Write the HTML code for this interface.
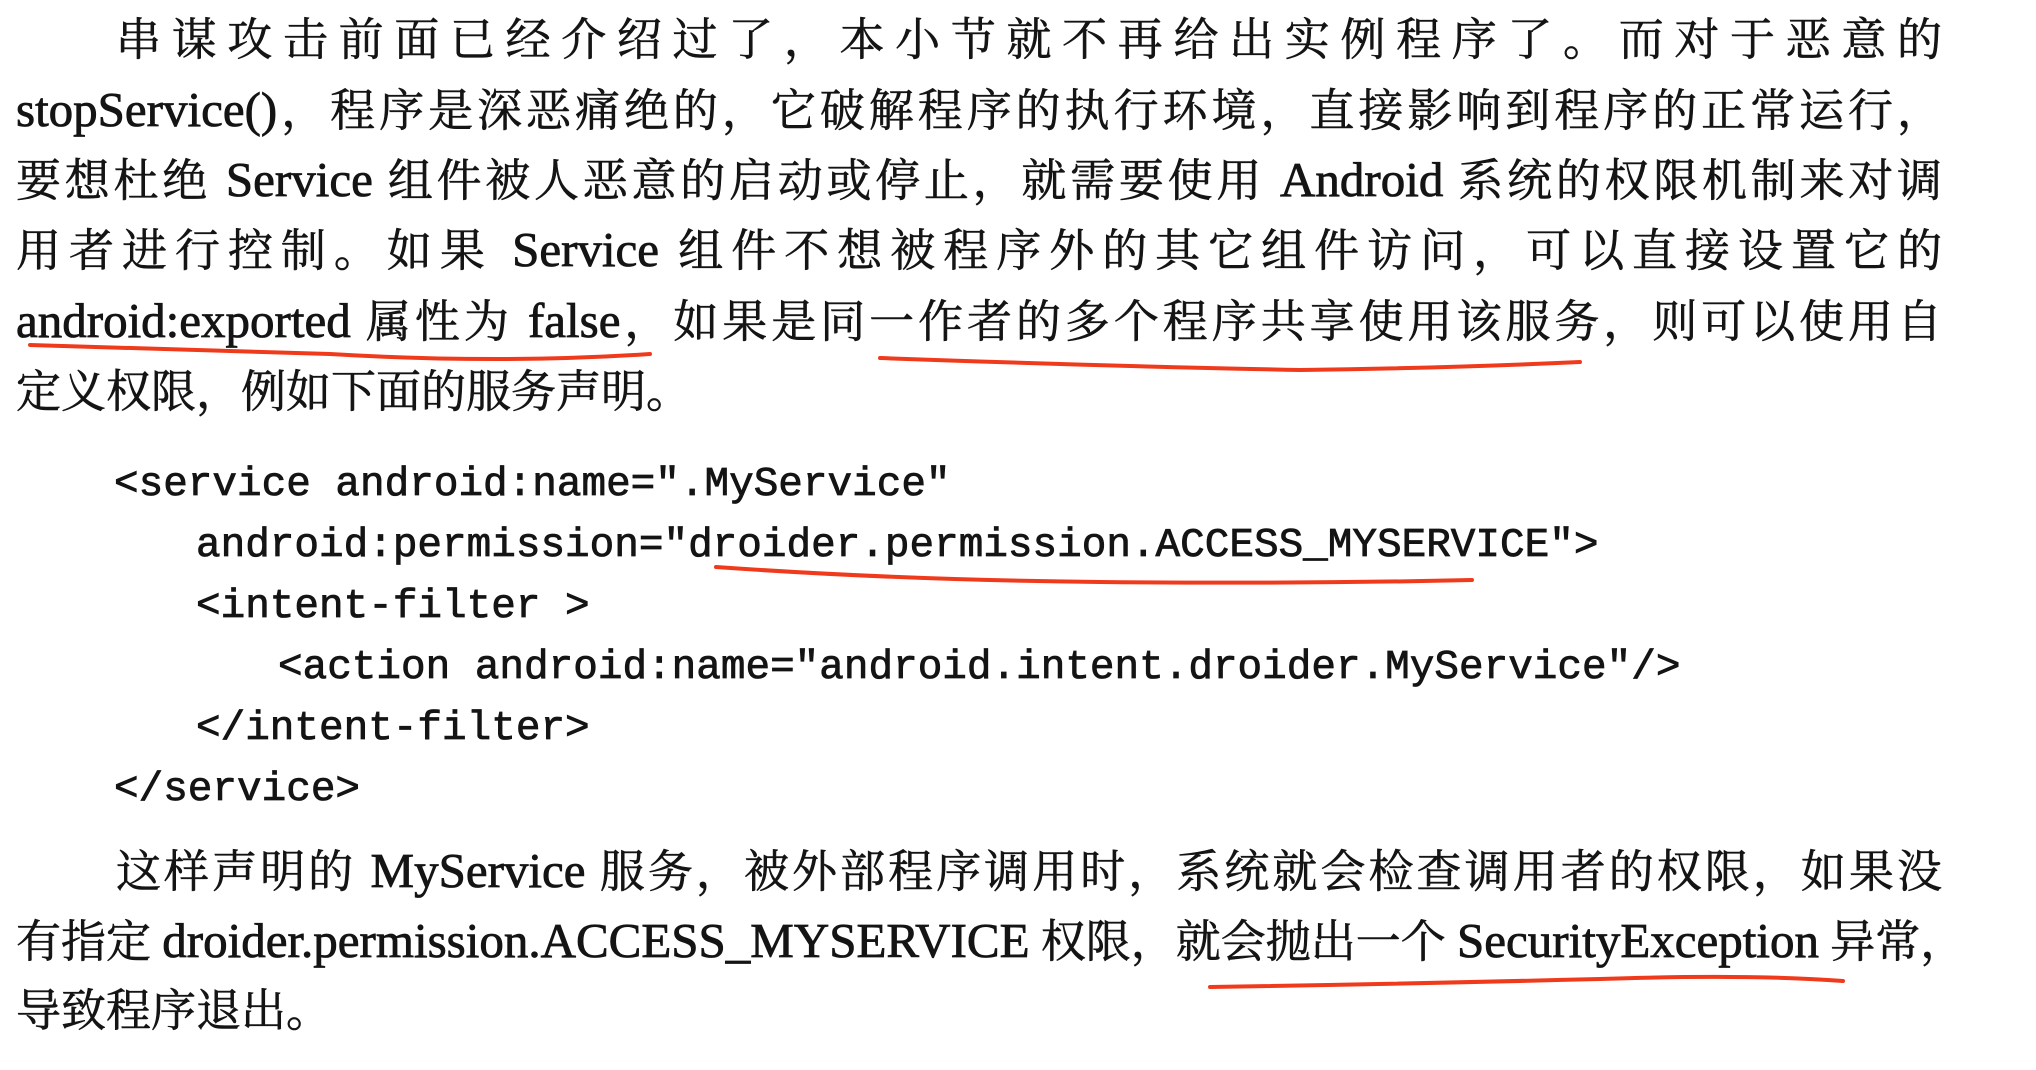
<!DOCTYPE html>
<html><head><meta charset="utf-8"><style>
body{margin:0;width:2036px;height:1070px;background:#fff;overflow:hidden;position:relative}
.t{position:absolute;font-family:"Liberation Serif","Noto Serif CJK SC",serif;font-size:45px;color:#141414;white-space:nowrap;text-align:justify;text-align-last:justify;line-height:70px;height:70px;-webkit-text-stroke:0.6px #141414}
.t b{font-size:49px;font-weight:normal;-webkit-text-stroke:0.8px #141414}
.nj{text-align:left;text-align-last:left}
.c{position:absolute;font-family:"Liberation Mono",monospace;font-size:41px;color:#141414;line-height:62px;white-space:pre;-webkit-text-stroke:0.8px #141414}
svg{position:absolute;left:0;top:0}
</style></head><body>
<div class="t" style="left:116px;top:5px;width:1826px">串谋攻击前面已经介绍过了，本小节就不再给出实例程序了。而对于恶意的</div>
<div class="t" style="left:16px;top:75px;width:1926px"><b>stopService()</b>，程序是深恶痛绝的，它破解程序的执行环境，直接影响到程序的正常运行，</div>
<div class="t" style="left:16px;top:145px;width:1926px">要想杜绝 <b>Service</b> 组件被人恶意的启动或停止，就需要使用 <b>Android</b> 系统的权限机制来对调</div>
<div class="t" style="left:16px;top:215px;width:1926px">用者进行控制。如果 <b>Service</b> 组件不想被程序外的其它组件访问，可以直接设置它的</div>
<div class="t" style="left:16px;top:286px;width:1926px"><b>android:exported</b> 属性为 <b>false</b>，如果是同一作者的多个程序共享使用该服务，则可以使用自</div>
<div class="t nj" style="left:16px;top:357px">定义权限，例如下面的服务声明。</div>
<div class="c" style="left:114px;top:454px">&lt;service android:name=".MyService"</div>
<div class="c" style="left:196px;top:515px">android:permission="droider.permission.ACCESS_MYSERVICE"&gt;</div>
<div class="c" style="left:196px;top:576px">&lt;intent-filter &gt;</div>
<div class="c" style="left:278px;top:637px">&lt;action android:name="android.intent.droider.MyService"/&gt;</div>
<div class="c" style="left:196px;top:698px">&lt;/intent-filter&gt;</div>
<div class="c" style="left:114px;top:759px">&lt;/service&gt;</div>
<div class="t" style="left:116px;top:836px;width:1826px">这样声明的 <b>MyService</b> 服务，被外部程序调用时，系统就会检查调用者的权限，如果没</div>
<div class="t" style="left:16px;top:906px;width:1926px">有指定 <b>droider.permission.ACCESS_MYSERVICE</b> 权限，就会抛出一个 <b>SecurityException</b> 异常，</div>
<div class="t nj" style="left:16px;top:976px">导致程序退出。</div>
<svg width="2036" height="1070" fill="none" stroke="#f03a1c" stroke-width="4" stroke-linecap="round">
<path d="M30 345 Q200 350 330 354 Q500 364 650 354"/>
<path d="M880 358 Q1100 366 1300 370 Q1450 368 1580 362"/>
<path d="M716 567 Q900 580 1100 582 Q1300 584 1472 580"/>
<path d="M1210 987 Q1400 984 1600 979 Q1750 974 1843 981"/>
</svg>
</body></html>
